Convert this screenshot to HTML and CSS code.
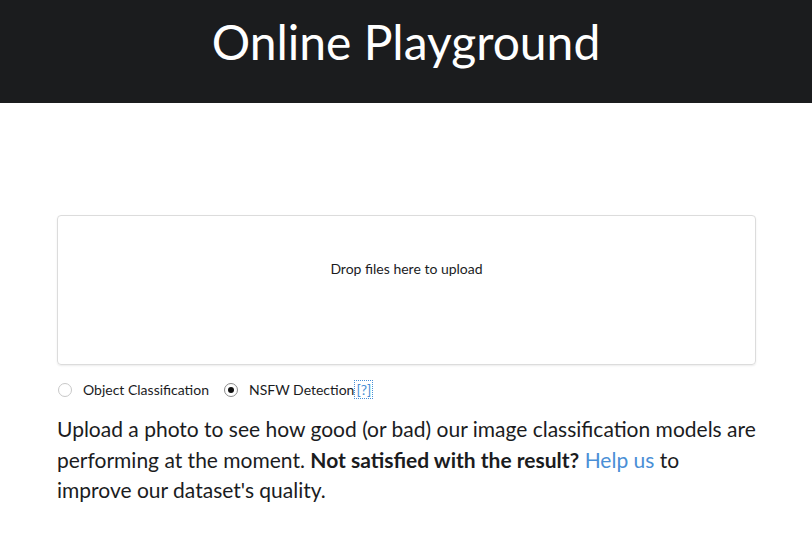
FILE: index.html
```html
<!DOCTYPE html>
<html>
<head>
<meta charset="utf-8">
<link rel="stylesheet" href="styles.css">
</head>
<body>
<header class="hero">
  <h1 class="hero-title">Online Playground</h1>
</header>
<main class="content">
  <div class="dropzone">
    <span class="dz-message">Drop files here to upload</span>
  </div>
  <div class="model-choice">
    <label class="choice"><span class="radio"></span>Object Classification</label>
    <label class="choice"><span class="radio checked"></span>NSFW Detection<a class="help" href="#">[?]</a></label>
  </div>
  <p class="intro">Upload a photo to see how good (or bad) our image classification models are performing at the moment. <strong>Not satisfied with the result?</strong> <a class="link" href="#">Help us</a> to improve our dataset's quality.</p>
</main>
</body>
</html>
```
FILE: styles.css
```css
html, body {
  margin: 0;
  padding: 0;
  background: #fff;
  font-family: Lato, "Open Sans", sans-serif;
  color: #1b1c1e;
}
.hero {
  background: #1b1c1e;
  height: 103px;
  display: flex;
  justify-content: center;
  align-items: center;
}
.hero-title {
  margin: 0;
  color: #fff;
  font-weight: 400;
  font-size: 48px;
  line-height: 1;
  padding-bottom: 20px;
}
.content {
  padding: 112px 56px 0 57px;
}
.dropzone {
  border: 1px solid #dcdcdc;
  border-radius: 4px;
  box-shadow: 0 1px 2px rgba(0,0,0,0.08);
  display: flex;
  align-items: center;
  justify-content: center;
  padding-bottom: 44px;
  box-sizing: content-box;
  height: 104px;
}
.dz-message {
  font-size: 14px;
  color: #1b1c1e;
}
.model-choice {
  display: flex;
  gap: 14px;
  margin-top: 16px;
  font-size: 14px;
  align-items: center;
}
.choice {
  display: flex;
  align-items: center;
}
.radio {
  width: 12px;
  height: 12px;
  border: 1px solid #c8c8c8;
  border-radius: 50%;
  margin-right: 11px;
  margin-left: 1px;
  display: inline-flex;
  align-items: center;
  justify-content: center;
  background: #fff;
}
.radio.checked {
  border-color: #8a8a8a;
}
.radio.checked::after {
  content: "";
  width: 6px;
  height: 6px;
  border-radius: 50%;
  background: #111;
}
.help {
  color: #4a8fd6;
  text-decoration: none;
  outline: 1px dotted #4a8fd6;
  margin-left: 1px;
  padding: 0 1px;
}
.intro {
  margin: 16px 0 0;
  font-size: 21px;
  line-height: 30.5px;
  max-width: 700px;
}
.intro strong {
  font-weight: 700;
}
.link {
  color: #4a8fd6;
  text-decoration: none;
}
```
